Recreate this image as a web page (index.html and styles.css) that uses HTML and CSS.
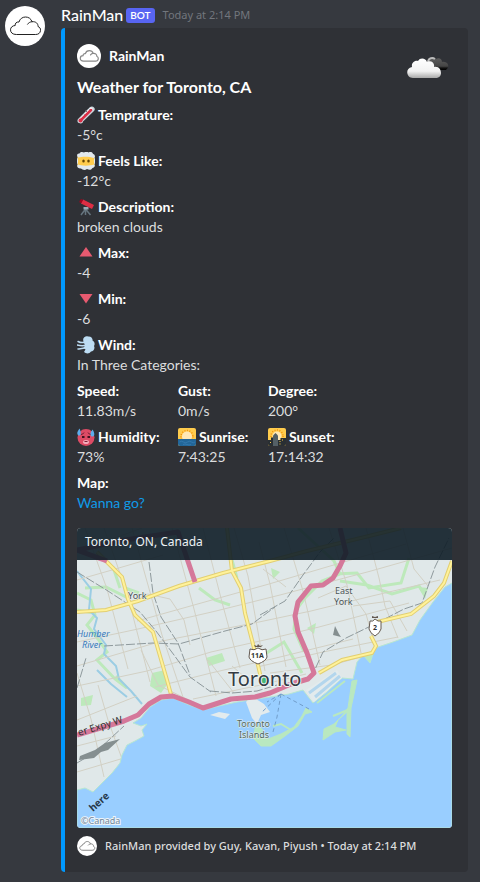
FILE: index.html
```html
<!DOCTYPE html>
<html lang="en">
<head>
<meta charset="utf-8">
<meta name="viewport" content="width=device-width, initial-scale=1">
<title>RainMan weather</title>
<link rel="stylesheet" href="styles.css">
</head>
<body>
<svg class="defs" aria-hidden="true">
  <symbol id="cloud" viewBox="0 0 40 40">
    <circle cx="20" cy="20" r="20" fill="#fff"/>
    <path d="M11 28.500C7.500 28.500 5.500 26.500 5.500 23.800C5.500 21.400 7.500 19.600 10.200 19.500C9.800 17.500 11.500 15.600 14 16C14.800 12.800 17.500 11 20.500 11C23.500 11 26 12.600 27 15.700C31 15.300 33.200 17.700 33 20.500C34.800 21.200 35.700 22.500 35.500 24.500C35.300 27 33.500 28.500 31 28.500ZM27 15.700C25 15.800 23.500 16.800 22.600 18.200" fill="none" stroke="currentColor" stroke-linejoin="round" stroke-linecap="round"/>
  </symbol>
</svg>
<article class="message">
  <svg class="avatar" role="img" aria-label="RainMan avatar"><use href="#cloud"/></svg>
  <div class="body">
    <header class="head">
      <span class="name">RainMan</span>
      <span class="bot">BOT</span>
      <time class="time">Today at 2:14 PM</time>
    </header>
    <section class="embed">
      <div class="top">
        <div class="intro">
          <div class="author"><svg class="author-icon" aria-hidden="true"><use href="#cloud"/></svg><span>RainMan</span></div>
          <h1 class="title">Weather for Toronto, CA</h1>
        </div>
        <svg class="weather" viewBox="0 0 45 24" role="img" aria-label="Broken clouds">
          <defs>
            <linearGradient id="white" x2="0" y2="1"><stop offset="0" stop-color="#fff"/><stop offset=".65" stop-color="#f2f2f2"/><stop offset="1" stop-color="#aaa"/></linearGradient>
            <linearGradient id="dark" x2="0" y2="1"><stop offset="0" stop-color="#606060"/><stop offset=".7" stop-color="#454545"/><stop offset=".85" stop-color="#111"/><stop offset="1" stop-color="#000"/></linearGradient>
          </defs>
          <path d="M20 14V6C21 1 26 0 29 3C32 1 35 3 35 6C40 5 44 10 39 14Z" fill="url(#dark)"/>
          <path d="M21 7C21 2 25 1 28 3" fill="none" stroke="#bbb" stroke-width="2"/>
          <path d="M6 22C-1 22-2 12 5 11C4 6 9 4 11 5C13 1 19 2 20 6C24 4 28 7 27 11C32 10 34 14 34 17C34 20 32 22 28 22Z" fill="url(#white)"/>
        </svg>
      </div>
      <dl class="fields">
        <div class="field"><dt><svg class="emoji" viewBox="0 0 36 36" aria-hidden="true"><path d="M3 25L25 3C28 0 32 0 34 3C37 6 35 9 33 11L12 31C12 35 7 36 4 34C0 33 0 27 3 25Z" fill="#ccd6dd"/><path d="M6 29L28 6" stroke="#fff" stroke-width="6" stroke-linecap="round"/><path d="M7 29L28 8" stroke="#da2f47" stroke-width="5" stroke-linecap="round"/><circle cx="7" cy="29" r="4" fill="#da2f47"/><path d="M17 9l3 3M22 4l3 3M12 14l3 3" stroke="#66757f" stroke-width="2"/></svg>Temprature:</dt><dd>-5°c</dd></div>
        <div class="field"><dt><svg class="emoji" viewBox="0 0 36 36" aria-hidden="true"><path d="M1 8H35V29H1Z" fill="#ffcc4d"/><path d="M3 11C-2 8 0 2 5 3C7-1 12 0 14 1C17-1 21-1 23 1C27-1 31 0 32 4C37 5 37 11 33 12C26 9 10 9 3 11ZM2 25C9 28 26 28 34 25C37 27 35 31 31 32C28 37 23 36 20 34C16 37 11 36 8 33C2 34-2 28 2 25Z" fill="#e1e8ed"/><path d="M0 10C3 14 3 22 0 26ZM36 10C33 14 33 22 36 26Z" fill="#e1e8ed"/><ellipse cx="13" cy="18" rx="2.500" ry="3" fill="#664500"/><ellipse cx="23" cy="18" rx="2.500" ry="3" fill="#664500"/></svg>Feels Like:</dt><dd>-12°c</dd></div>
        <div class="field"><dt><svg class="emoji" viewBox="0 0 36 36" aria-hidden="true"><path d="M17 22L8 34M17 22V34M17 22L27 34" stroke="#66757f" stroke-width="3"/><path d="M13 18h10v5H13z" fill="#99aab5"/><path d="M8 10L12 3L34 14L30 22L8 11Z" fill="#dd2e44"/><path d="M5 6L8 2L12 4L9 10L5 9Z" fill="#a0041e"/></svg>Description:</dt><dd>broken clouds</dd></div>
        <div class="field"><dt><svg class="emoji" viewBox="0 0 36 36" aria-hidden="true"><path d="M18 6L31 25H5Z" fill="#e75a70"/></svg>Max:</dt><dd>-4</dd></div>
        <div class="field"><dt><svg class="emoji" viewBox="0 0 36 36" aria-hidden="true"><path d="M18 27L5 8H31Z" fill="#e75a70"/></svg>Min:</dt><dd>-6</dd></div>
        <div class="field"><dt><svg class="emoji" viewBox="0 0 36 36" aria-hidden="true"><path d="M13 11C10 4 17-1 22 1C28 0 32 5 31 9C36 12 36 17 34 20C37 26 32 31 28 31C25 36 18 36 14 32L17 27L13 24L16 19Z" fill="#bdddf4"/><path d="M2 11C8 14 13 14 18 11M0 18C8 20 14 20 19 18M2 26C9 25 15 25 20 22" fill="none" stroke="#bdddf4" stroke-width="3" stroke-linecap="round"/></svg>Wind:</dt><dd>In Three Categories:</dd></div>
      </dl>
      <dl class="fields inline">
        <div class="field"><dt>Speed:</dt><dd>11.83m/s</dd></div>
        <div class="field"><dt>Gust:</dt><dd>0m/s</dd></div>
        <div class="field"><dt>Degree:</dt><dd>200°</dd></div>
        <div class="field"><dt><svg class="emoji" viewBox="0 0 36 36" aria-hidden="true"><circle cx="18" cy="19" r="17" fill="#dd4b65"/><path d="M8 13Q12 13 14 9M22 9Q24 13 28 13" fill="none" stroke="#6c1d31" stroke-width="2"/><path d="M10 18h5M21 18h5" stroke="#42131f" stroke-width="4"/><ellipse cx="18" cy="28" rx="6" ry="4" fill="#f4abba"/><path d="M15 27h6" stroke="#7a2339" stroke-width="2"/><path d="M5 1C0 8-1 12 3 15C8 16 9 10 5 1ZM31 3C26 10 26 14 29 17C35 18 37 12 31 3Z" fill="#5dadec"/></svg>Humidity:</dt><dd>73%</dd></div>
        <div class="field"><dt><svg class="emoji" viewBox="0 0 36 36" aria-hidden="true"><rect width="36" height="36" rx="4" fill="#ffcc4d"/><circle cx="18" cy="17" r="12" fill="none" stroke="#f4900c" stroke-width="3" stroke-dasharray="2 3"/><circle cx="18" cy="17" r="10" fill="#ffe8b6"/><path d="M0 22H36V32Q36 36 32 36H4Q0 36 0 32Z" fill="#226699"/><path d="M3 28q4-3 8 0t8 0t8 0t7 0M10 33q4-2 8 0t8 0" fill="none" stroke="#4289c1"/></svg>Sunrise:</dt><dd>7:43:25</dd></div>
        <div class="field"><dt><svg class="emoji" viewBox="0 0 36 36" aria-hidden="true"><rect width="36" height="36" rx="4" fill="#ffcc4d"/><circle cx="18" cy="16" r="12" fill="none" stroke="#f4900c" stroke-width="3" stroke-dasharray="2 3"/><circle cx="18" cy="16" r="9" fill="#ffe8b6"/><path d="M0 24H6V19H10V36H4Q0 36 0 32Z" fill="#292f33"/><path d="M10 36V15L15 10L20 15V36Z" fill="#546066"/><path d="M20 24H25V20H36V32Q36 36 32 36H20Z" fill="#292f33"/><path d="M23 27h2M28 24h2M23 32h2M4 29h2" stroke="#ffcc4d" stroke-width="2"/></svg>Sunset:</dt><dd>17:14:32</dd></div>
      </dl>
      <dl class="fields">
        <div class="field"><dt>Map:</dt><dd><a class="link" href="#map">Wanna go?</a></dd></div>
      </dl>
      <figure class="map" id="map">
        <svg class="map-art" viewBox="0 0 375 300" role="img" aria-label="Map of Toronto">
          <rect width="375" height="300" fill="#e0e8e9"/>
          <g class="parks">
            <path d="M0 65L14 72L18 87L10 97L21 111L30 124L20 132L38 151L50 160L39 148M8 60L29 59L51 70M48 60L62 65M122 60L138 72L153 77M155 32L160 50M221 0L257 33L263 46L245 53L228 70L219 82L217 101L227 124M257 46L280 45L292 60L324 55L332 30M263 53L290 57L315 66L342 58L347 65M188 126L207 114L225 145M0 82L17 85M36 39L43 60"/>
            <path d="M75 145L88 142L92 154L84 165L73 158ZM129 130L145 125L148 133L132 138ZM4 170L16 167L14 177L4 178ZM194 40L203 44L196 51ZM341 59L351 60L348 71ZM230 100L239 95L237 106ZM284 129L294 123L300 130L292 142Z"/>
          </g>
          <path class="river" d="M0 43L14 61L12 82L20 90L17 101L29 117L27 126L39 138L42 151L54 163L65 176M20 142L34 156L50 169"/>
          <g class="grid">
            <path d="M0 52L35 42L86 27M0 114L61 101L139 83L203 67L294 43L375 20M0 138L85 113L182 94L234 83L295 68L363 52M0 158L70 143L134 124L192 111L242 99L298 84L332 75M0 192L60 168M0 244L57 227M0 218L39 208M78 159L134 145L199 130L276 111M116 171L184 157L229 146M0 24L65 0M60 93L192 56L277 31L329 16M180 139L246 124L321 109M193 145L255 137L316 120"/>
            <path d="M8 0L30 61L51 141M27 0L50 65L73 154M55 0L85 107L107 172M95 0L117 81L139 168M126 0L146 78L163 140M157 0L171 48L188 143M182 14L193 56L209 139M207 0L226 63L243 137M252 0L270 57L284 125M289 0L302 50L308 78L321 110M326 0L337 41L351 58M0 145L14 191L27 249M21 157L31 192L45 231M66 65L93 71L107 92L113 117M64 122L81 157L118 175M131 132L157 165M155 138L176 156M186 41L209 59M241 70L269 58L289 86L297 115M276 78L313 73L330 103"/>
          </g>
          <path class="rail" d="M0 44L31 63L63 84L79 103L97 127L113 149L134 164M72 34L76 65L84 89L101 115L113 147M27 118L76 115L102 116L148 103L175 96L198 79M0 160L9 130M183 87L208 73L226 47L243 24L257 10M234 150L246 124L269 110L300 95L327 81L345 75L358 39L372 10M0 235L20 223L47 198M133 163L155 165L180 163L200 157"/>
          <path class="water" d="M375 55L368 59L356 74L343 92L335 107L316 114L298 120L293 135L286 127L280 134L276 151L265 150L250 164L236 175L226 162L212 166L193 169L180 171L160 174L142 178L126 182L110 176L96 170L84 172L73 179L64 190L56 195L64 198L70 196L65 202L67 208L58 213L50 217L45 227L43 235L35 245L26 254L16 264L8 260L0 262V300H375Z"/>
          <path d="M133 187L142 184L153 186L148 191ZM169 174L174 168L187 176L193 184L184 187L180 196L175 190ZM229 162L260 142L265 150L237 174Z" fill="#e3ebed"/>
          <path d="M232 165L259 145M238 169L263 148" fill="none" stroke="#b3d6ed" stroke-width="3"/>
          <g class="island"><path d="M179 196L186 202L182 207L191 211L204 206L217 199L225 188L229 180L235 184L228 186L221 198L208 208L194 218L184 218L176 210ZM246 212L247 201L257 196L265 188L271 180L275 153L280 152L274 180L273 209L270 206L270 184L261 192L258 199L269 202L258 204Z"/><path d="M196 198L204 196L214 202M256 188L273 181M240 175L268 153"/></g>
          <path class="ferry" d="M204 166L184 185M204 166L200 189L196 204M204 166L232 181M204 166L190 174"/>
          <path class="yellow-edge" d="M0 84L29 82L61 73L102 58L146 45L193 33L230 23L292 8L324 0M20 24L45 49L51 71L58 87L76 104L90 152L95 170M150 0L155 43L164 60L168 85L177 120L184 150M242 145L265 132L295 125L299 118L294 108M300 94L334 86L357 68L367 55L375 33"/>
          <path class="yellow" d="M0 84L29 82L61 73L102 58L146 45L193 33L230 23L292 8L324 0M20 24L45 49L51 71L58 87L76 104L90 152L95 170M150 0L155 43L164 60L168 85L177 120L184 150M242 145L265 132L295 125L299 118L294 108M300 94L334 86L357 68L367 55L375 33"/>
          <path class="highway" d="M0 22L30 33M0 22L48 12L101 4L118 54M263 0L269 25L263 38L256 50L246 57L234 58L221 74L218 88L221 104L230 125L237 145L231 151L214 156L193 165L178 169L154 171L126 180L112 174L96 168L84 169L72 176L61 187L47 193L0 207"/>
          <path d="M3 228L18 222L28 215L43 211L31 222L24 224L17 230L2 232ZM256 107L258 98L262 106L264 109Z" fill="#858f90"/>
          <text class="place" x="51" y="71">York</text>
          <text class="place"><tspan x="258" y="66">East</tspan><tspan x="257" y="77">York</tspan></text>
          <text class="river-name"><tspan x="0" y="109">Humber</tspan><tspan x="5" y="120">River</tspan></text>
          <circle cx="188" cy="152" r="4" fill="#45b878"/>
          <text class="city" x="151" y="158">Toronto</text>
          <text class="islands-name"><tspan x="160" y="199">Toronto</tspan><tspan x="162" y="210">Islands</tspan></text>
          <text class="road-name" transform="translate(2 208) rotate(-17)">er Expy W</text>
          <g class="shield"><path d="M173 121Q177 123 181 120Q185 123 189 121L190 129Q189 133 181 136Q173 133 172 129Z"/><path d="M178 119L177 117L180 118L181 116L183 118L186 117L184 119Z"/><path d="M293 93Q296 94 298 91Q301 94 304 93V101Q303 105 298 108Q293 105 292 101Z"/><path d="M295 90V88L298 89L301 88V90Z"/><text x="174" y="130">11A</text><text x="296" y="102">2</text></g>
          <text class="here" transform="translate(16 284) rotate(-42)">here</text>
          <text class="copyright" x="4" y="296">©Canada</text>
        </svg>
        <figcaption class="caption">Toronto, ON, Canada</figcaption>
      </figure>
      <footer class="foot"><svg class="foot-icon" aria-hidden="true"><use href="#cloud"/></svg><span>RainMan provided by Guy, Kavan, Piyush • Today at 2:14 PM</span></footer>
    </section>
  </div>
</article>
</body>
</html>
```
FILE: styles.css
```css
* { box-sizing: border-box; }
body { margin: 0; background: #36393f; color: #dcddde; font: 14px/18px Lato, "Noto Sans", sans-serif; }
.defs { position: absolute; width: 0; height: 0; }
.message { display: flex; align-items: flex-start; gap: 16px; padding: 4px 12px 10px 5px; }
.avatar { flex: none; width: 40px; height: 40px; margin-top: 2px; color: #222; }
.body { flex: 1; min-width: 0; }
.head { display: flex; align-items: center; height: 22px; margin-bottom: 2px; }
.name { color: #fff; font-size: 16px; line-height: 22px; font-weight: 500; }
.bot { margin: 0 8px 0 3px; padding: 0 4px; border-radius: 3px; background: #5865f2; color: #fff; font-size: 10px; line-height: 15px; font-weight: 600; }
.time { color: #72767d; font: 11px/22px "Noto Sans", sans-serif; }
.embed { padding: 16px 16px 16px 12px; border-left: 4px solid #0099ff; border-radius: 4px; background: #2f3136; }
.top { display: flex; justify-content: space-between; align-items: flex-start; margin-bottom: 8px; }
.author { display: flex; align-items: center; gap: 8px; height: 24px; margin-bottom: 8px; color: #fff; font-size: 14px; font-weight: 700; }
.author-icon { width: 24px; height: 24px; color: #888; stroke-width: 2px; }
.title { margin: 0; color: #fff; font-size: 16px; line-height: 22px; font-weight: 700; }
.weather { width: 45px; height: 24px; margin-top: 12px; }
.fields { display: grid; gap: 8px; margin: 0 0 8px; }
.inline { grid-template-columns: 101px 90px 1fr; column-gap: 0; }
.field dt { display: flex; align-items: center; gap: 3px; margin-bottom: 2px; color: #fff; font-size: 14px; font-weight: 700; }
.field dd { margin: 0; }
.emoji { flex: none; width: 18px; height: 18px; }
.link { color: #0f9be8; text-decoration: none; }
.map { position: relative; margin: 16px 0 8px; overflow: hidden; border-radius: 4px; }
.map-art { display: block; width: 100%; height: auto; font-family: "Noto Sans", sans-serif; }
.caption { position: absolute; top: 0; left: 0; right: 0; padding: 3px 8px 7px; background: rgba(14, 29, 39, .9); color: #edf2f5; font: 12px/22px "Noto Sans", sans-serif; }
.parks path { fill: none; stroke: #bde9bb; stroke-width: 3px; }
.parks path + path { fill: #bde9bb; stroke: none; }
.river { fill: none; stroke: #9bcde4; stroke-width: 2px; }
.grid { fill: none; stroke: #d2d0c4; stroke-width: 1px; }
.rail { fill: none; stroke: #8e999c; stroke-width: 1px; stroke-dasharray: 9px 2px; }
.water { fill: #99ceff; stroke: #b6e6d1; stroke-width: 1px; }
.island { fill: #b9e8c0; stroke: #b9e8c0; stroke-width: 1px; }
.island path + path { fill: none; stroke-width: 2px; }
.ferry { fill: none; stroke: #719dca; stroke-width: 1px; stroke-dasharray: 4px 3px; }
.yellow-edge { fill: none; stroke: #e2cf72; stroke-width: 4px; }
.yellow { fill: none; stroke: #fff29a; stroke-width: 2px; }
.highway { fill: none; stroke: #d5789a; stroke-width: 5px; stroke-linejoin: round; }
.place, .islands-name { fill: #4b5356; font-size: 9px; paint-order: stroke; stroke: #e8eeee; stroke-width: 1px; }
.islands-name { fill: #4c6962; }
.river-name { fill: #367abd; font-size: 9px; font-style: italic; }
.city { fill: #343b43; font-size: 20px; paint-order: stroke; stroke: #eef3f3; stroke-width: 2px; }
.road-name { fill: #333; font-size: 10px; }
.shield { fill: #635950; }
.shield path:nth-child(odd) { fill: #fff; stroke: #635950; stroke-width: 1px; }
.shield text { fill: #333; font-size: 7px; font-weight: 700; }
.here { fill: #26384a; font-size: 10px; font-weight: 700; }
.copyright { fill: #71879b; font-size: 9px; paint-order: stroke; stroke: #edf4f9; stroke-width: 2px; }
.foot { display: flex; align-items: center; gap: 8px; min-height: 20px; font: 500 11px/16px "Noto Sans", sans-serif; }
.foot-icon { flex: none; width: 20px; height: 20px; color: #888; stroke-width: 2px; }
```
